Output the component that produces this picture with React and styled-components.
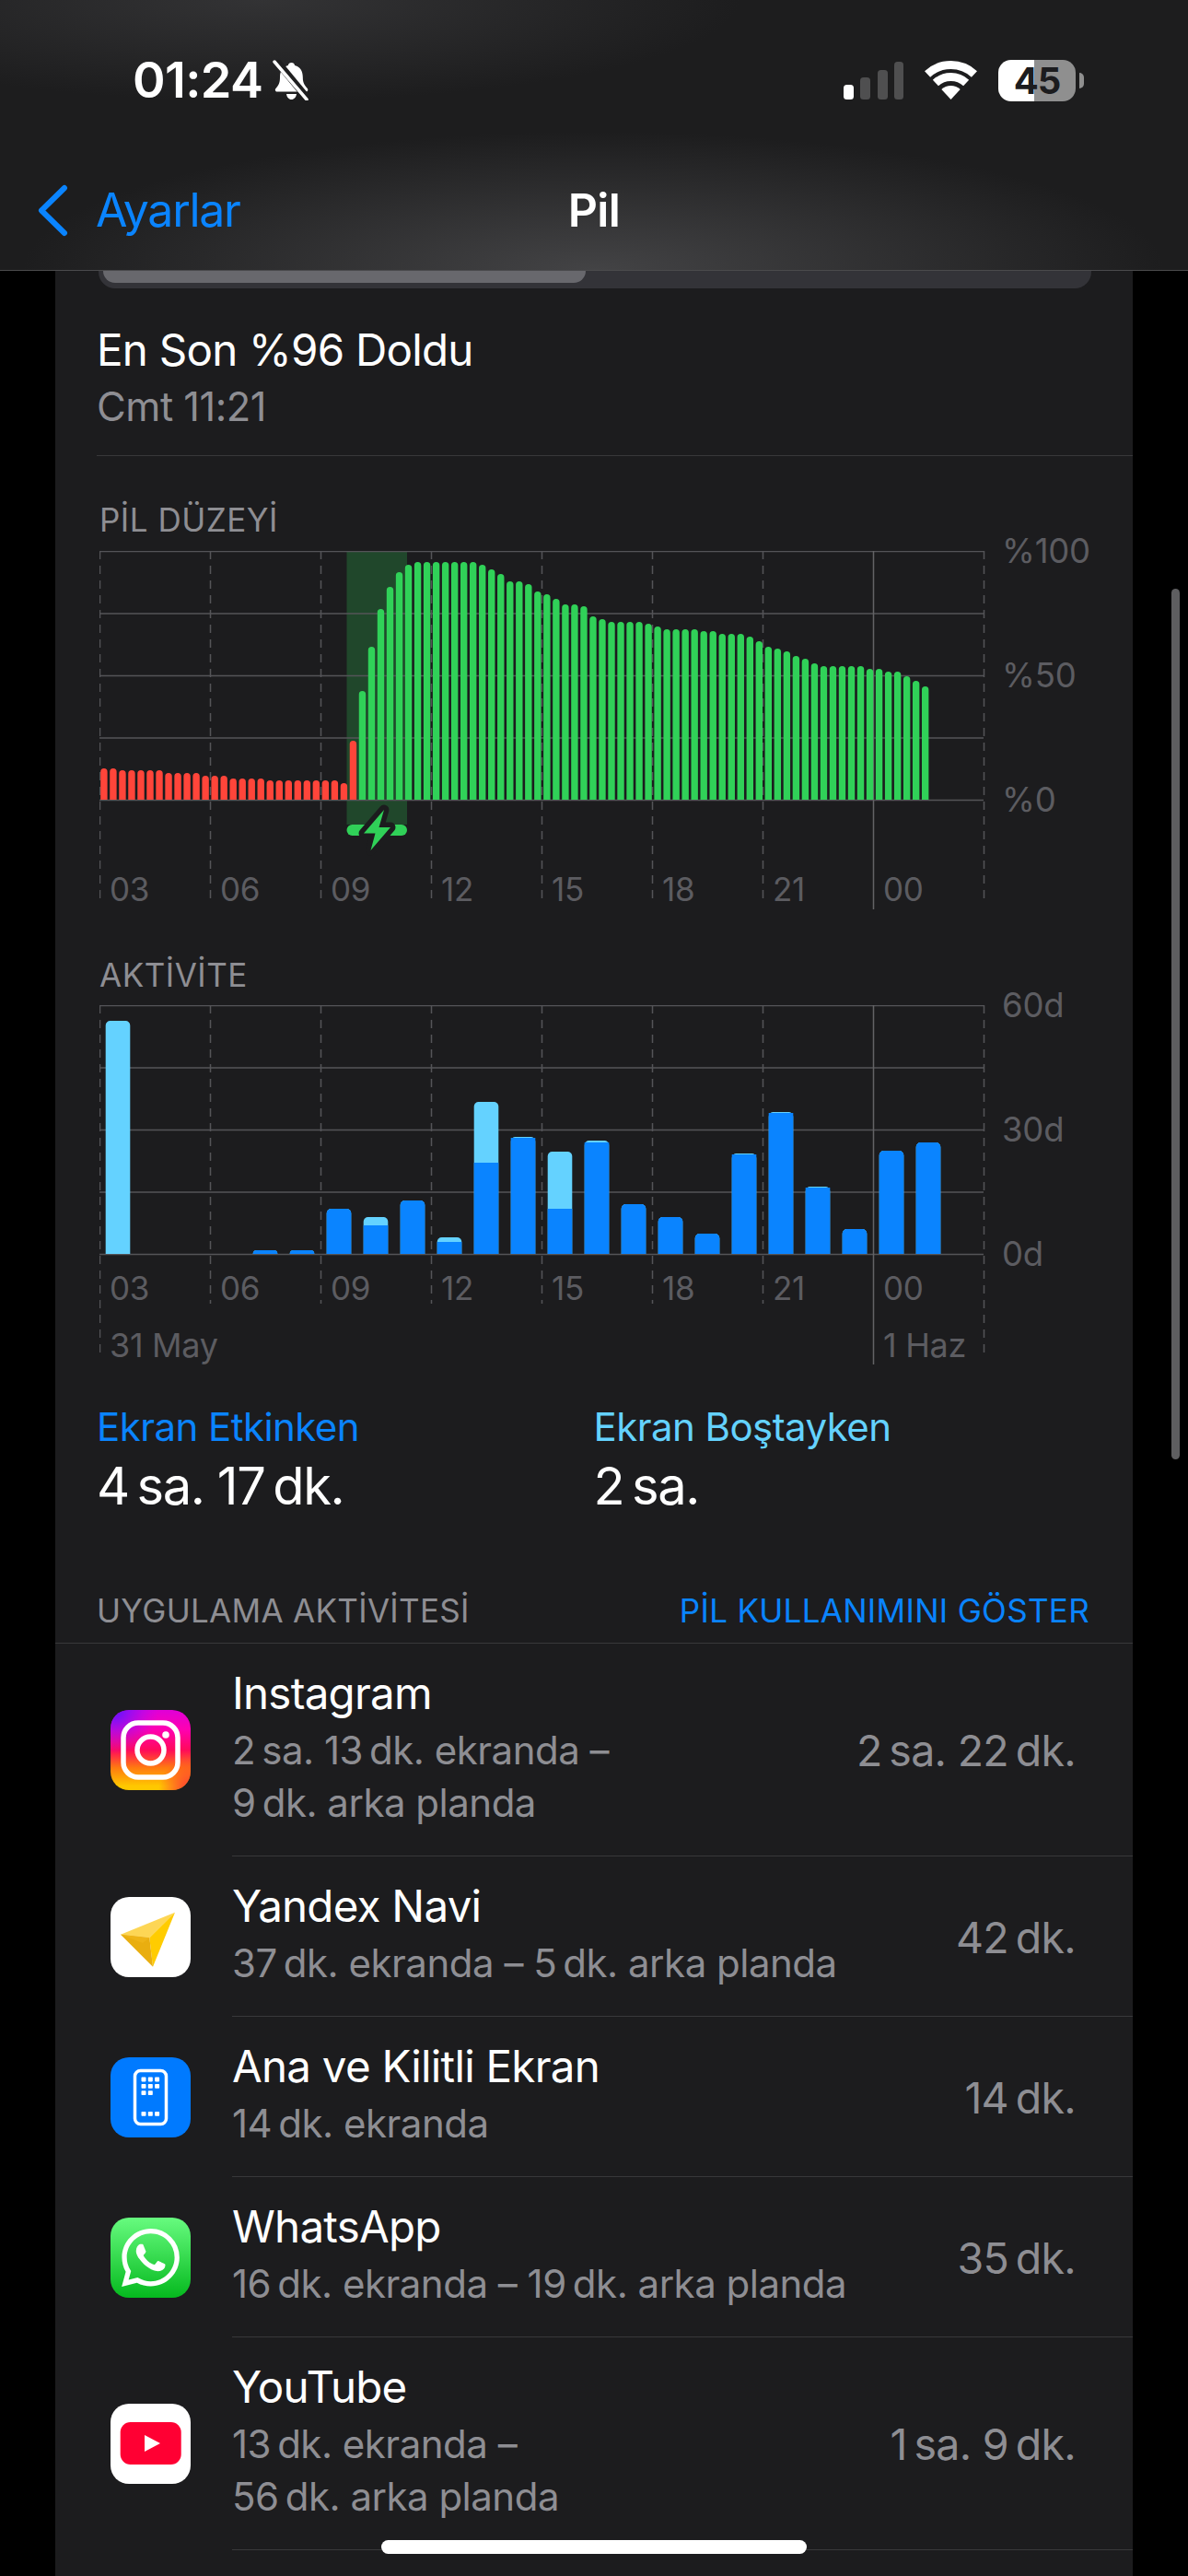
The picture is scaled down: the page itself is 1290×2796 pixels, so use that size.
import React from "react";
import styled, { createGlobalStyle } from "styled-components";
import { SiWhatsapp } from "react-icons/si";

const GlobalStyle = createGlobalStyle`
  html, body {
    margin: 0;
    background: #000;
    font-family: Inter, "Noto Sans", sans-serif;
    -webkit-font-smoothing: antialiased;
  }
`;

const Screen = styled.div`
  position: relative;
  width: 1290px;
  height: 2796px;
  overflow: hidden;
  background: #000;
`;

const Header = styled.header`
  height: 293px;
  box-sizing: content-box;
  background:
    radial-gradient(ellipse 620px 150px at 50% 100%, rgba(74, 74, 76, 0.85), rgba(74, 74, 76, 0) 100%),
    radial-gradient(ellipse 520px 110px at 22% 0%, rgba(60, 60, 62, 0.7), rgba(60, 60, 62, 0) 100%),
    #1d1d1e;
  border-bottom: 1px solid #4a4a4c;
  display: flex;
  flex-direction: column;
`;

const StatusBar = styled.div`
  display: flex;
  align-items: center;
  justify-content: space-between;
  height: 46px;
  margin-top: 64px;
  padding: 0 113px 0 144px;
`;

const StatusLeft = styled.div`
  display: flex;
  align-items: center;
  gap: 10px;
`;

const StatusRight = styled.div`
  display: flex;
  align-items: center;
`;

const Clock = styled.span`
  color: #fff;
  font-size: 54px;
  font-weight: 600;
  letter-spacing: -0.6px;
  line-height: 46px;
`;

const Battery = styled.div`
  width: 84px;
  height: 45px;
  margin-left: 23px;
  border-radius: 14px;
  background: linear-gradient(90deg, #fff 46%, #8f8f8f 46%);
  color: #1c1c1e;
  font-size: 40px;
  font-weight: 700;
  letter-spacing: -1px;
  line-height: 45px;
  text-align: center;
`;

const BatteryNub = styled.div`
  width: 5px;
  height: 17px;
  margin-left: 4px;
  border-radius: 0 5px 5px 0;
  background: #8f8f8f;
`;

const NavBar = styled.nav`
  display: grid;
  grid-template-columns: 1fr auto 1fr;
  align-items: center;
  height: 57px;
  margin-top: 88px;
  padding: 0 40px;
`;

const BackLink = styled.div`
  display: flex;
  align-items: center;
  gap: 30px;
  color: #0a84ff;
  font-size: 50px;
  letter-spacing: -1.3px;
`;

const NavTitle = styled.div`
  color: #fff;
  font-size: 50px;
  font-weight: 600;
  letter-spacing: -0.6px;
`;

const Card = styled.main`
  width: 1170px;
  margin-left: 60px;
  background: #1c1c1e;
  height: 2502px;
`;

const Progress = styled.div`
  width: 1078px;
  height: 19px;
  margin-left: 47px;
  background: #333338;
  border-radius: 0 0 18px 18px;
`;

const ProgressFill = styled.div`
  width: 524px;
  height: 13px;
  margin-left: 5px;
  background: #68686d;
  border-radius: 0 0 14px 14px;
`;

const LastCharge = styled.section`
  margin-left: 45px;
  padding: 34px 0 24px;
  border-bottom: 1px solid #38383a;
`;

const Primary = styled.div`
  color: #fff;
  font-size: ${({ $size }) => $size || 47.5}px;
  line-height: ${({ $line }) => $line || 66}px;
  letter-spacing: ${({ $track }) => $track ?? -0.75}px;
  white-space: nowrap;
`;

const Secondary = styled.div`
  color: #8e8e93;
  font-size: ${({ $size }) => $size || 42}px;
  line-height: 57px;
  letter-spacing: -0.5px;
  white-space: nowrap;
`;

const ChartTitle = styled.h2`
  margin: ${({ $top }) => $top}px 0 0 48px;
  height: 40px;
  color: #8e8e93;
  font-size: 35px;
  font-weight: 400;
  line-height: 40px;
  letter-spacing: 0.5px;
`;

const ChartRow = styled.div`
  display: flex;
  margin: ${({ $gap }) => $gap}px 0 0 48px;
`;

const Plot = styled.div`
  position: relative;
  width: 962px;
  height: ${({ $height }) => $height}px;
  flex: none;
`;

const PlotDrawing = styled.svg`
  position: absolute;
  left: 0;
  top: 0;
`;

const XAxis = styled.div`
  position: relative;
  display: grid;
  grid-template-columns: repeat(8, 120px);
  padding-top: ${({ $top }) => $top}px;
`;

const AxisLabel = styled.span`
  color: #5c5c61;
  font-size: 35px;
  line-height: 40px;
  padding-left: 11px;
  letter-spacing: -0.3px;
  white-space: nowrap;
`;

const DateLabel = styled(AxisLabel)`
  font-size: 36px;
`;

const DateRow = styled.div`
  position: relative;
  display: grid;
  grid-template-columns: 840px 120px;
  margin-top: 22px;
`;

const YAxis = styled.div`
  display: flex;
  flex-direction: column;
  justify-content: space-between;
  height: 270px;
  margin-left: 18px;
`;

const YLabel = styled.span`
  color: #5c5c61;
  font-size: 36.5px;
  line-height: 0;
  height: 0;
  letter-spacing: -0.2px;
  white-space: nowrap;
`;

const Totals = styled.section`
  display: grid;
  grid-template-columns: 539.5px 1fr;
  margin: 39px 0 0 45px;
`;

const TotalLabel = styled.div`
  color: ${({ $color }) => $color};
  font-size: 42px;
  line-height: 58px;
  letter-spacing: -0.55px;
`;

const SectionHead = styled.div`
  display: flex;
  justify-content: space-between;
  align-items: center;
  height: 54px;
  margin-top: 73px;
  padding: 0 47px 8px 45px;
  border-bottom: 1px solid #38383a;
  font-size: 35px;
  line-height: 44px;
`;

const SectionTitle = styled.span`
  color: #8e8e93;
  letter-spacing: 0.3px;
`;

const SectionAction = styled.span`
  color: #0a84ff;
  letter-spacing: 0.3px;
`;

const AppRow = styled.div`
  display: flex;
  align-items: center;
  padding-left: 60px;
`;

const AppTile = styled.div`
  flex: none;
  display: flex;
  align-items: center;
  justify-content: center;
  width: 87px;
  height: 87px;
  border-radius: 20px;
  overflow: hidden;
  background: ${({ $bg }) => $bg};
`;

const AppBody = styled.div`
  flex: 1;
  display: flex;
  align-items: center;
  justify-content: space-between;
  margin-left: 45px;
  padding-right: 62px;
  border-bottom: 1px solid #38383a;
`;

const AppText = styled.div`
  padding: 21px 0 29px;
`;

const AppValue = styled.div`
  padding-top: 2px;
  color: #8e8e93;
  font-size: 46.5px;
  letter-spacing: -0.7px;
  white-space: nowrap;
`;

const ScrollThumb = styled.div`
  position: absolute;
  left: 1272px;
  top: 639px;
  width: 9px;
  height: 945px;
  border-radius: 5px;
  background: #5e5e60;
`;

const HomeIndicator = styled.div`
  position: absolute;
  left: 414px;
  top: 2757px;
  width: 462px;
  height: 15px;
  border-radius: 8px;
  background: #fff;
`;

// bar heights in px, read off the reference
const LEVELS_RED = [34, 34, 32, 32, 32, 32, 32, 29, 29, 29, 29, 26, 26, 26, 23, 23, 23, 23, 21, 21, 21, 21, 21, 21, 21, 21, 18, 64];
const LEVELS_GREEN = [
  118, 166, 207, 231, 247, 255, 258, 258, 258, 258, 258, 258, 258, 255, 250, 245, 237, 237, 234, 226, 223, 218, 212, 212, 210,
  199, 196, 193, 193, 193, 193, 191, 188, 185, 185, 185, 185, 183, 183, 180, 180, 180, 177, 172, 166, 164, 161, 156, 153, 148,
  145, 145, 145, 145, 145, 142, 142, 139, 139, 134, 129, 123,
];

// [total, screen on] for each 40px slot
const ACTIVITY = [
  [253, 0], [0, 0], [0, 0], [0, 0], [4, 4], [4, 4], [49, 49], [40, 31], [58, 58], [18, 13], [165, 99], [127, 126],
  [111, 49], [123, 121], [54, 54], [40, 40], [22, 22], [109, 108], [154, 153], [73, 72], [27, 27], [112, 112], [121, 121],
];

const HOURS = ["03", "06", "09", "12", "15", "18", "21", "00"];
const GRID = "#545458";

const topRounded = (x, y, w, h, r) => {
  const c = Math.min(r, h);
  return `M${x} ${y + h}V${y + c}A${c} ${c} 0 0 1 ${x + c} ${y}H${x + w - c}A${c} ${c} 0 0 1 ${x + w} ${y + c}V${y + h}Z`;
};

const Grid = ({ bottom, edgeBottom, solidBottom }) => (
  <>
    {[0, 67.5, 135, 202.5, 270].map((y) => (
      <line key={y} x1="0" x2="960" y1={y + 0.5} y2={y + 0.5} stroke={GRID} strokeWidth="1.5" />
    ))}
    {[0, 120, 240, 360, 480, 600, 720, 960].map((x) => (
      <line
        key={x}
        x1={x + 0.5}
        x2={x + 0.5}
        y1="0"
        y2={x === 0 || x === 960 ? edgeBottom : bottom}
        stroke={GRID}
        strokeWidth="1.5"
        strokeDasharray="9 7"
      />
    ))}
    <line x1="840.5" x2="840.5" y1="0" y2={solidBottom} stroke="#636366" strokeWidth="1.5" />
  </>
);

const LevelDrawing = () => (
  <PlotDrawing width="962" height="400" viewBox="0 0 962 400">
    <rect x="268.5" y="0" width="65.5" height="297" fill="#20472b" />
    <Grid bottom={384} edgeBottom={384} solidBottom={389} />
    {[...LEVELS_RED, ...LEVELS_GREEN].map((h, i) => (
      <path
        key={i}
        d={topRounded(1.2 + i * 10.02, 270 - h, 7.4, h, 3.7)}
        fill={i < LEVELS_RED.length ? "#ff453a" : "#30d158"}
      />
    ))}
    <rect x="268.5" y="297" width="65.5" height="12" rx="6" fill="#30d158" />
    <path
      d="M309 281 L287 306.5 H299.5 L294.5 325 L316 300 H303.5 Z"
      fill="#30d158"
      stroke="#1c1c1e"
      strokeWidth="11"
      strokeLinejoin="round"
      paintOrder="stroke"
    />
  </PlotDrawing>
);

const ActivityDrawing = () => (
  <PlotDrawing width="962" height="400" viewBox="0 0 962 400">
    <Grid bottom={324} edgeBottom={384} solidBottom={390} />
    {ACTIVITY.map(([total, on], i) => {
      const x = 6.7 + i * 40;
      if (!total) return null;
      return (
        <g key={i}>
          <path d={topRounded(x, 270 - total, 26.6, total, 5)} fill="#64d2ff" />
          {on > 0 && (
            <path
              d={on === total ? topRounded(x, 270 - on, 26.6, on, 5) : `M${x} 270V${270 - on}H${x + 26.6}V270Z`}
              fill="#0a84ff"
            />
          )}
        </g>
      );
    })}
  </PlotDrawing>
);

const BellSlash = () => (
  <svg width="43" height="44" viewBox="0 0 43 44">
    <path
      d="M21.5 3c2 0 3.2 1.2 3.6 3 6 1.6 8.7 6.4 8.7 12.5 0 7 2 9 5 12.5 1.2 1.5.4 3.5-1.5 3.5H6c-2 0-2.8-2-1.5-3.5 3-3.5 4.5-5.5 4.5-12.5C9 12.4 11.8 7.6 17.8 6c.4-1.8 1.7-3 3.7-3zM16 37h11c-.5 3.5-2.7 6-5.5 6S16.5 40.5 16 37z"
      fill="#fff"
    />
    <line x1="5" y1="1" x2="39" y2="42" stroke="#1f1f20" strokeWidth="8" />
    <line x1="3" y1="2" x2="38" y2="43" stroke="#fff" strokeWidth="3.5" strokeLinecap="round" />
  </svg>
);

const SignalBars = () => (
  <svg width="65" height="41" viewBox="0 0 65 41">
    <rect x="0" y="25" width="11" height="16" rx="3.5" fill="#fff" />
    <rect x="18" y="17" width="11" height="24" rx="3.5" fill="#4f4f50" />
    <rect x="37" y="9" width="11" height="32" rx="3.5" fill="#4f4f50" />
    <rect x="55" y="0" width="10" height="41" rx="3.5" fill="#4f4f50" />
  </svg>
);

const WifiGlyph = () => (
  <svg width="57" height="42" viewBox="0 0 57 42" style={{ marginLeft: 23 }}>
    <path d="M3.07 14.44A37.5 37.5 0 0 1 53.93 14.44" fill="none" stroke="#fff" strokeWidth="9" />
    <path d="M11.89 24A24.5 24.5 0 0 1 45.11 24" fill="none" stroke="#fff" strokeWidth="9" />
    <path d="M28.5 42L18.33 30.97A15 15 0 0 1 38.67 30.97Z" fill="#fff" />
  </svg>
);

const BackChevron = () => (
  <svg width="34" height="57" viewBox="0 0 34 57">
    <path d="M30 4 L5 28.5 L30 53" fill="none" stroke="#0a84ff" strokeWidth="6" strokeLinecap="round" strokeLinejoin="round" />
  </svg>
);

const InstagramIcon = () => (
  <svg width="87" height="87" viewBox="0 0 87 87">
    <defs>
      <linearGradient id="igBase" x1="0" y1="0" x2="0" y2="1">
        <stop offset="0" stopColor="#e000d8" />
        <stop offset="0.25" stopColor="#ff00b0" />
        <stop offset="0.5" stopColor="#ff0a5a" />
        <stop offset="0.72" stopColor="#ff7a10" />
        <stop offset="0.95" stopColor="#ffc800" />
      </linearGradient>
      <radialGradient id="igCool" cx="0.05" cy="0" r="0.55">
        <stop offset="0" stopColor="#5a14ff" />
        <stop offset="1" stopColor="#a010ff" stopOpacity="0" />
      </radialGradient>
      <radialGradient id="igEdge" cx="1" cy="1" r="0.4">
        <stop offset="0" stopColor="#ff2a3a" />
        <stop offset="1" stopColor="#ff2a3a" stopOpacity="0" />
      </radialGradient>
    </defs>
    <rect width="87" height="87" fill="url(#igBase)" />
    <rect width="87" height="87" fill="url(#igCool)" />
    <rect width="87" height="87" fill="url(#igEdge)" />
    <rect x="14" y="14" width="59" height="59" rx="16" fill="none" stroke="#fff" strokeWidth="5.5" />
    <circle cx="43.5" cy="43.5" r="14.5" fill="none" stroke="#fff" strokeWidth="5.5" />
    <circle cx="60" cy="27" r="3.8" fill="#fff" />
  </svg>
);

const YandexIcon = () => (
  <svg width="87" height="87" viewBox="0 0 87 87">
    <polygon points="70,16.7 11,40.7 42.3,44.3" fill="#fdd655" />
    <polygon points="70,16.7 42.3,44.3 46,75.7" fill="#ffcc00" />
    <polygon points="11,40.7 42.3,44.3 46,75.7" fill="#e9ae10" />
    <polygon points="11,40.7 42.3,44.3 35,50" fill="#eeb417" />
  </svg>
);

const ScreenIcon = () => (
  <svg width="87" height="87" viewBox="0 0 87 87">
    <rect x="26.5" y="14.5" width="34" height="58" rx="6" fill="none" stroke="#fff" strokeWidth="3.5" />
    {[0, 1, 2].map((row) =>
      [0, 1, 2].map((col) =>
        row === 2 && col === 2 ? null : (
          <rect key={`${row}${col}`} x={33.5 + col * 7.3} y={21.6 + row * 7.3} width="5" height="4.8" rx="0.8" fill="#fff" />
        ),
      ),
    )}
    {[0, 1, 2].map((col) => (
      <rect key={col} x={33.5 + col * 7.3} y="59" width="5" height="4.8" rx="0.8" fill="#fff" />
    ))}
  </svg>
);

const YouTubeIcon = () => (
  <svg width="87" height="87" viewBox="0 0 87 87">
    <rect x="10.7" y="20" width="66" height="46" rx="11" fill="#ff0033" />
    <polygon points="37,34 54,43 37,52" fill="#fff" />
  </svg>
);

const APPS = [
  {
    name: "Instagram",
    lines: ["2\u2009sa. 13\u2009dk. ekranda –", "9\u2009dk. arka planda"],
    value: "2\u2009sa. 22\u2009dk.",
    bg: "#000",
    icon: <InstagramIcon />,
  },
  {
    name: "Yandex Navi",
    lines: ["37\u2009dk. ekranda – 5\u2009dk. arka planda"],
    value: "42\u2009dk.",
    bg: "#fff",
    icon: <YandexIcon />,
  },
  {
    name: "Ana ve Kilitli Ekran",
    lines: ["14\u2009dk. ekranda"],
    value: "14\u2009dk.",
    bg: "#007aff",
    icon: <ScreenIcon />,
  },
  {
    name: "WhatsApp",
    lines: ["16\u2009dk. ekranda – 19\u2009dk. arka planda"],
    value: "35\u2009dk.",
    bg: "linear-gradient(180deg, #67fb7f, #05b91e)",
    icon: <SiWhatsapp size={63} color="#fff" />,
  },
  {
    name: "YouTube",
    lines: ["13\u2009dk. ekranda –", "56\u2009dk. arka planda"],
    value: "1\u2009sa. 9\u2009dk.",
    bg: "#fff",
    icon: <YouTubeIcon />,
  },
];

const App = () => {
  return (
    <Screen>
      <GlobalStyle />
      <Header>
        <StatusBar>
          <StatusLeft>
            <Clock>01:24</Clock>
            <BellSlash />
          </StatusLeft>
          <StatusRight>
            <SignalBars />
            <WifiGlyph />
            <Battery>45</Battery>
            <BatteryNub />
          </StatusRight>
        </StatusBar>
        <NavBar>
          <BackLink>
            <BackChevron />
            Ayarlar
          </BackLink>
          <NavTitle>Pil</NavTitle>
        </NavBar>
      </Header>
      <Card>
        <Progress>
          <ProgressFill />
        </Progress>
        <LastCharge>
          <Primary>En Son %96 Doldu</Primary>
          <Secondary $size={43.5}>Cmt 11:21</Secondary>
        </LastCharge>

        <ChartTitle $top={49}>PİL DÜZEYİ</ChartTitle>
        <ChartRow $gap={14}>
          <Plot $height={389}>
            <LevelDrawing />
            <XAxis $top={347}>
              {HOURS.map((h) => (
                <AxisLabel key={h}>{h}</AxisLabel>
              ))}
            </XAxis>
          </Plot>
          <YAxis>
            <YLabel>%100</YLabel>
            <YLabel>%50</YLabel>
            <YLabel>%0</YLabel>
          </YAxis>
        </ChartRow>

        <ChartTitle $top={51}>AKTİVİTE</ChartTitle>
        <ChartRow $gap={13}>
          <Plot $height={390}>
            <ActivityDrawing />
            <XAxis $top={287}>
              {HOURS.map((h) => (
                <AxisLabel key={h}>{h}</AxisLabel>
              ))}
            </XAxis>
            <DateRow>
              <DateLabel>31 May</DateLabel>
              <DateLabel>1 Haz</DateLabel>
            </DateRow>
          </Plot>
          <YAxis>
            <YLabel>60d</YLabel>
            <YLabel>30d</YLabel>
            <YLabel>0d</YLabel>
          </YAxis>
        </ChartRow>

        <Totals>
          <div>
            <TotalLabel $color="#0a84ff">Ekran Etkinken</TotalLabel>
            <Primary $size={56} $line={70} $track={-1.4}>4{"\u2009"}sa. 17{"\u2009"}dk.</Primary>
          </div>
          <div>
            <TotalLabel $color="#64d2ff">Ekran Boştayken</TotalLabel>
            <Primary $size={56} $line={70} $track={-1.4}>2{"\u2009"}sa.</Primary>
          </div>
        </Totals>

        <SectionHead>
          <SectionTitle>UYGULAMA AKTİVİTESİ</SectionTitle>
          <SectionAction>PİL KULLANIMINI GÖSTER</SectionAction>
        </SectionHead>

        {APPS.map((app) => (
          <AppRow key={app.name}>
            <AppTile $bg={app.bg}>{app.icon}</AppTile>
            <AppBody>
              <AppText>
                <Primary>{app.name}</Primary>
                {app.lines.map((line) => (
                  <Secondary key={line}>{line}</Secondary>
                ))}
              </AppText>
              <AppValue>{app.value}</AppValue>
            </AppBody>
          </AppRow>
        ))}
      </Card>
      <ScrollThumb />
      <HomeIndicator />
    </Screen>
  );
};

export default App;
